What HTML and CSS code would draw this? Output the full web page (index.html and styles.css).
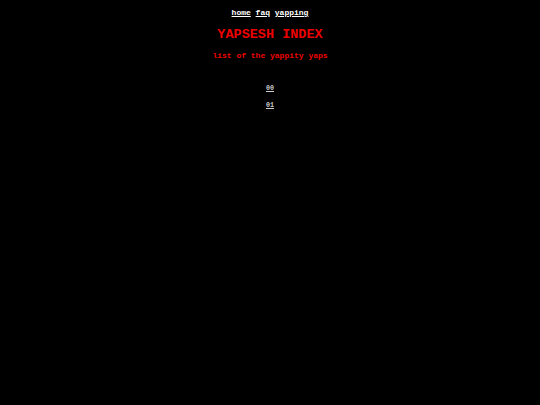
FILE: index.html
```html
<!DOCTYPE html>
<html>
<head>
<meta charset="utf-8">
<link rel="stylesheet" href="styles.css">
</head>
<body>
<nav class="nav"><a href="#">home</a> <a href="#">faq</a> <a href="#">yapping</a></nav>
<h1 class="title">YAPSESH INDEX</h1>
<p class="sub">list of the yappity yaps</p>
<ul class="list">
<li><a href="#">00</a></li>
<li><a href="#">01</a></li>
</ul>
</body>
</html>
```
FILE: styles.css
```css
html, body { background: #000; }
body {
  margin: 0;
  padding-top: 8px;
  font-family: "Liberation Mono", "Courier New", monospace;
  font-weight: bold;
  text-align: center;
  color: #fff;
}
.nav { font-size: 8px; line-height: 10px; }
.nav a { color: #fff; }
.title {
  color: #e00;
  font-size: 13.5px;
  line-height: 16px;
  margin: 9px 0 0;
}
.sub {
  color: #e00;
  font-size: 8px;
  line-height: 10px;
  margin: 8px 0 0;
}
.list {
  list-style: none;
  padding: 0;
  margin: 23px 0 0;
  font-size: 6.7px;
  line-height: 8px;
}
.list li { margin-bottom: 9px; }
.list a { color: #ccc; }
```
